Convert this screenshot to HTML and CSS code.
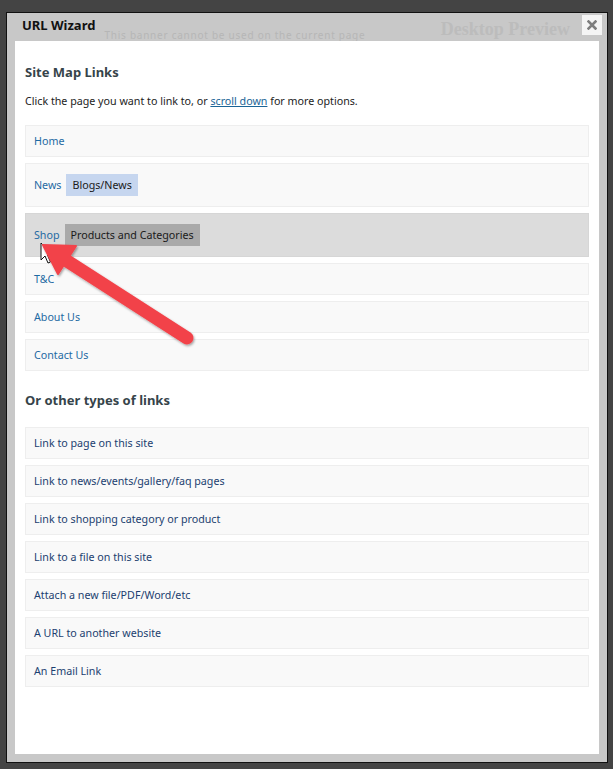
FILE: index.html
```html
<!DOCTYPE html>
<html>
<head>
	<title>URL Wizard</title>
	<meta charset="UTF-8">
	<link rel="stylesheet" href="styles.css">
</head>
<body>
	<div class="dialog">
		<div class="dialog_head">
			<span class="dialog_title">URL Wizard</span>
			<span class="ghost_text">This banner cannot be used on the current page</span>
			<span class="ghost_title">Desktop Preview</span>
			<span class="close_btn">
				<svg width="10" height="10" viewBox="0 0 10 10"><path d="M1.5 1.5 L8.5 8.5 M8.5 1.5 L1.5 8.5" stroke="#7d7d7d" stroke-width="2.6" stroke-linecap="square"/></svg>
			</span>
		</div>
		<div class="dialog_body">
			<h3 class="section_title">Site Map Links</h3>
			<p class="intro">Click the page you want to link to, or <a href="#" class="scroll_link">scroll down</a> for more options.</p>
			<div class="rows">
				<div class="link_row"><a href="#" class="page_link">Home</a></div>
				<div class="link_row"><a href="#" class="page_link">News</a><span class="chip chip_blue">Blogs/News</span></div>
				<div class="link_row link_row_active"><a href="#" class="page_link">Shop</a><span class="chip chip_grey">Products and Categories</span></div>
				<div class="link_row"><a href="#" class="page_link">T&amp;C</a></div>
				<div class="link_row"><a href="#" class="page_link">About Us</a></div>
				<div class="link_row"><a href="#" class="page_link">Contact Us</a></div>
			</div>
			<h3 class="section_title section_second">Or other types of links</h3>
			<div class="rows rows_second">
				<div class="link_row"><a href="#" class="type_link">Link to page on this site</a></div>
				<div class="link_row"><a href="#" class="type_link">Link to news/events/gallery/faq pages</a></div>
				<div class="link_row"><a href="#" class="type_link">Link to shopping category or product</a></div>
				<div class="link_row"><a href="#" class="type_link">Link to a file on this site</a></div>
				<div class="link_row"><a href="#" class="type_link">Attach a new file/PDF/Word/etc</a></div>
				<div class="link_row"><a href="#" class="type_link">A URL to another website</a></div>
				<div class="link_row"><a href="#" class="type_link">An Email Link</a></div>
			</div>
		</div>
	</div>

	<!-- annotation drawn over the screenshot -->
	<svg class="annot" width="613" height="769" viewBox="0 0 613 769">
		<defs>
			<filter id="shade" x="-20%" y="-20%" width="140%" height="140%">
				<feDropShadow dx="1" dy="1.5" stdDeviation="1.2" flood-color="#000" flood-opacity="0.35"/>
			</filter>
		</defs>
		<path d="M41 243 L41 260 L45 256 L48 263 L50.5 262 L47.5 255 L53 255 Z" fill="#fff" stroke="#111" stroke-width="1"/>
		<g filter="url(#shade)">
			<line x1="64" y1="259" x2="187" y2="338" stroke="#f2434a" stroke-width="13" stroke-linecap="round"/>
			<polygon points="43,245 76,246 58,274" fill="#f2434a" stroke="#f2434a" stroke-width="2" stroke-linejoin="round"/>
		</g>
	</svg>
</body>
</html>
```
FILE: styles.css
```css
*{
	margin: 0px;
	padding: 0px;
}
body{
	background-color: #444444;
	font-family: "Noto Sans", "Open Sans", sans-serif;
	width: 613px;
	height: 769px;
	overflow: hidden;
	position: relative;
}
.dialog{
	width: 602px;
	height: 751px;
	margin: 12px 0 0 6px;
	box-sizing: border-box;
	border: 1px solid #111;
	background-color: #c8c8c8;
	padding: 0 8px 8px 8px;
	display: flex;
	flex-direction: column;
}
.dialog_head{
	height: 28px;
	display: flex;
	align-items: flex-start;
	overflow: hidden;
	padding-left: 7px;
	margin-right: -3px;
}
.dialog_title{
	font-size: 13px;
	font-weight: bold;
	line-height: 18px;
	color: #111;
	margin-top: 3px;
}
.ghost_text{
	font-size: 10px;
	line-height: 12px;
	color: #b6b6b6;
	margin: 16px 0 0 9px;
	letter-spacing: 0.75px;
	white-space: nowrap;
}
.ghost_title{
	font-family: "Liberation Serif", serif;
	font-size: 18px;
	font-weight: bold;
	line-height: 20px;
	color: #bcbcbc;
	margin: 6px 12px 0 auto;
	white-space: nowrap;
}
.close_btn{
	width: 20px;
	height: 20px;
	margin-top: 2px;
	background-color: #f4f4f4;
	display: flex;
	align-items: center;
	justify-content: center;
	flex-shrink: 0;
}
.dialog_body{
	flex: 1;
	background-color: #fff;
	padding: 22px 10px 0 10px;
}
.section_title{
	font-size: 13px;
	font-weight: bold;
	line-height: 18px;
	color: #36444a;
}
.section_second{
	margin-top: 20px;
}
.intro{
	margin-top: 12px;
	font-size: 10.7px;
	line-height: 16px;
	color: #222;
}
.scroll_link{
	color: #1a6496;
	text-decoration: underline;
}
.rows{
	margin-top: 16px;
}
.rows_second{
	margin-top: 18px;
}
.link_row{
	border: 1px solid #eeeeee;
	background-color: #f9f9f9;
	padding: 7px 8px;
	line-height: 16px;
	font-size: 10.7px;
	margin-bottom: 6px;
}
.link_row_active{
	background-color: #dcdcdc;
	border-color: #d6d6d6;
}
.page_link{
	color: #1f6aa3;
	text-decoration: none;
}
.type_link{
	color: #1c3f70;
	text-decoration: none;
}
.chip{
	display: inline-block;
	padding: 3px 6px;
	margin: 3px 0 3px 5px;
	line-height: 16px;
	color: #1a1a1a;
}
.chip_blue{
	background-color: #c6d6ef;
}
.chip_grey{
	background-color: #a9a9a9;
}
.annot{
	position: absolute;
	left: 0;
	top: 0;
	pointer-events: none;
}
```
